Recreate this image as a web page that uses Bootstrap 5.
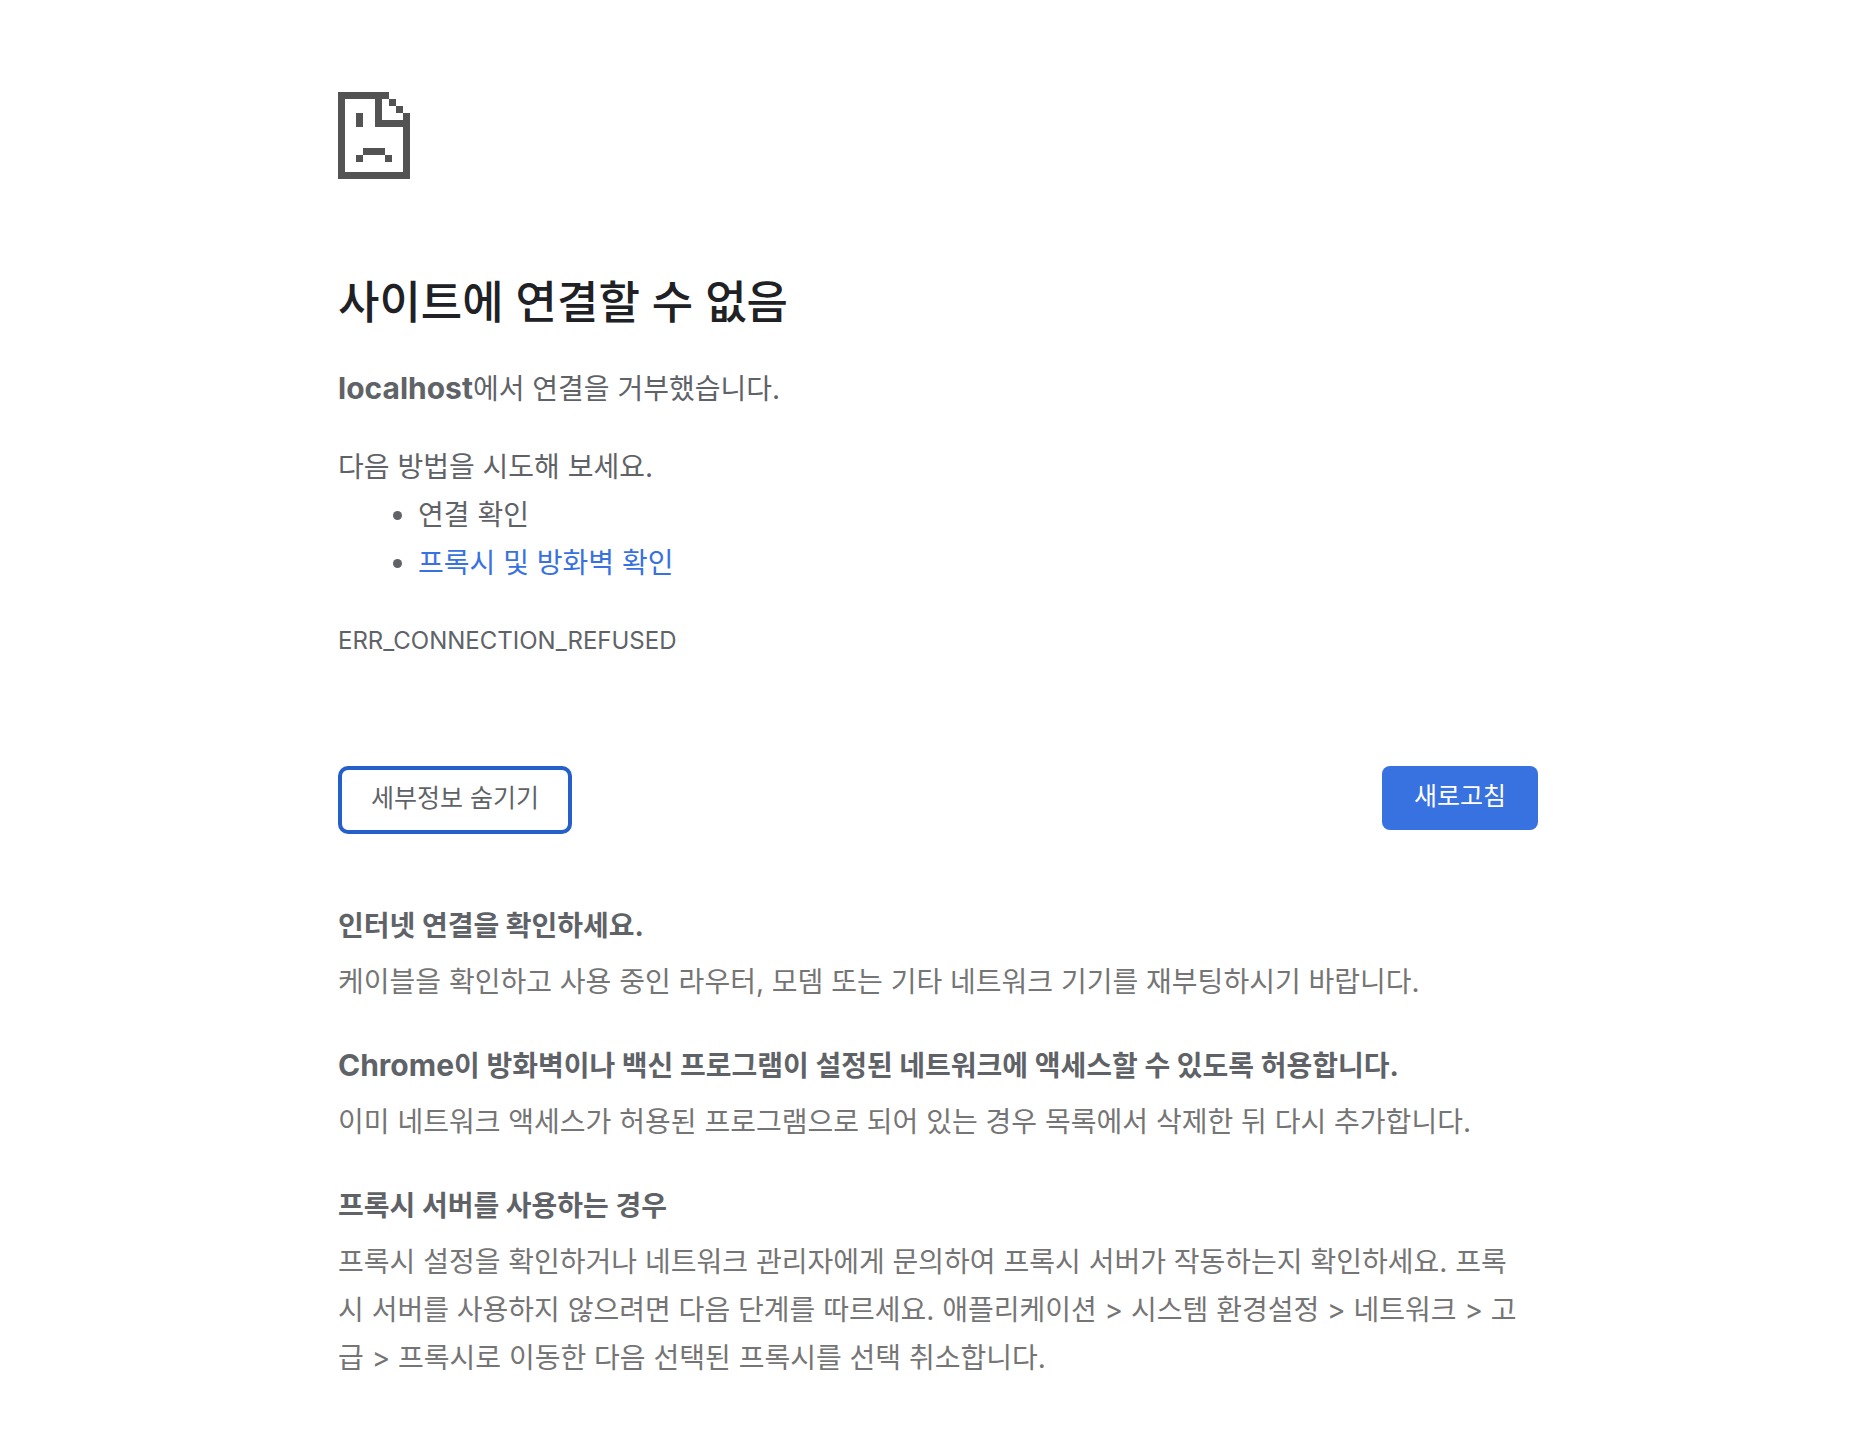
<!DOCTYPE html>
<html lang="ko">
<head>
<meta charset="utf-8">
<meta name="viewport" content="width=device-width, initial-scale=1">
<title>localhost</title>
<link rel="stylesheet" href="https://cdn.jsdelivr.net/npm/bootstrap@5.3.0/dist/css/bootstrap.min.css">
<style>
  body {
    font-family: Inter, "Noto Sans CJK KR", sans-serif;
    font-size: 28px;
    line-height: 48px;
    color: #5f6368;
    background: #fff;
    padding-left: 24px;
  }
  .error-page { max-width: 1200px; padding: 92px 0 60px; }
  .error-icon { width: 72px; height: 87px; margin-bottom: 94px; fill: #535353; }
  .error-title { font-size: 45px; line-height: 60px; font-weight: 500; color: #202124; margin-bottom: 32px; }
  .error-text { margin-bottom: 30px; }
  .latin { font-size: 30px; line-height: 1; }
  .tips { padding-left: 80px; margin-bottom: 30px; }
  .tips a { color: #3871e0; }
  .error-code { font-size: 24px; }
  .actions { margin: 101px 0 68px; }
  .actions .btn { font-size: 25px; line-height: 36px; border-radius: 8px; }
  .actions .btn-details, .btn-details:hover { color: #5f6368; background: #fff; border: 4px solid #255fc9; padding: 10px 29px 14px; border-radius: 10px; }
  .btn-reload, .btn-reload:hover { color: #fff; background: #3871e0; border: 0; padding: 12px 32px 16px; }
  .detail { margin-bottom: 36px; }
  .detail h2 { font-size: 28px; line-height: 48px; font-weight: 700; margin-bottom: 8px; }
  .detail p { color: #757575; padding-right: 12px; }
</style>
<script src="https://cdn.jsdelivr.net/npm/bootstrap@5.3.0/dist/js/bootstrap.bundle.min.js" defer></script>
</head>
<body>
<main class="error-page container-fluid">
  <svg class="error-icon d-block" viewBox="0 0 72 87" shape-rendering="crispEdges" aria-hidden="true">
    <path fill-rule="evenodd" d="M0 0H51V7H58V14H65V21H72V87H0ZM7 7V80H65V35H37V7ZM44 7V28H65V21H58V14H51V7Z"/>
    <path d="M18 21h7v14h-7zM25 56h22v7h7v7h-7v-7H25v7h-7v-7h7z"/>
  </svg>
  <h1 class="error-title">사이트에 연결할 수 없음</h1>
  <p class="error-text"><strong class="latin">localhost</strong>에서 연결을 거부했습니다.</p>
  <p class="mb-0">다음 방법을 시도해 보세요.</p>
  <ul class="tips">
    <li>연결 확인</li>
    <li><a class="text-decoration-none" href="#buttons">프록시 및 방화벽 확인</a></li>
  </ul>
  <div class="error-code">ERR_CONNECTION_REFUSED</div>
  <div class="actions d-flex justify-content-between align-items-start" id="buttons">
    <button type="button" class="btn btn-details">세부정보 숨기기</button>
    <button type="button" class="btn btn-reload">새로고침</button>
  </div>
  <section class="detail">
    <h2>인터넷 연결을 확인하세요.</h2>
    <p class="mb-0">케이블을 확인하고 사용 중인 라우터, 모뎀 또는 기타 네트워크 기기를 재부팅하시기 바랍니다.</p>
  </section>
  <section class="detail">
    <h2><span class="latin">Chrome</span>이 방화벽이나 백신 프로그램이 설정된 네트워크에 액세스할 수 있도록 허용합니다.</h2>
    <p class="mb-0">이미 네트워크 액세스가 허용된 프로그램으로 되어 있는 경우 목록에서 삭제한 뒤 다시 추가합니다.</p>
  </section>
  <section class="detail mb-0">
    <h2>프록시 서버를 사용하는 경우</h2>
    <p class="mb-0">프록시 설정을 확인하거나 네트워크 관리자에게 문의하여 프록시 서버가 작동하는지 확인하세요. 프록시 서버를 사용하지 않으려면 다음 단계를 따르세요. 애플리케이션 &gt; 시스템 환경설정 &gt; 네트워크 &gt; 고급 &gt; 프록시로 이동한 다음 선택된 프록시를 선택 취소합니다.</p>
  </section>
</main>
</body>
</html>
